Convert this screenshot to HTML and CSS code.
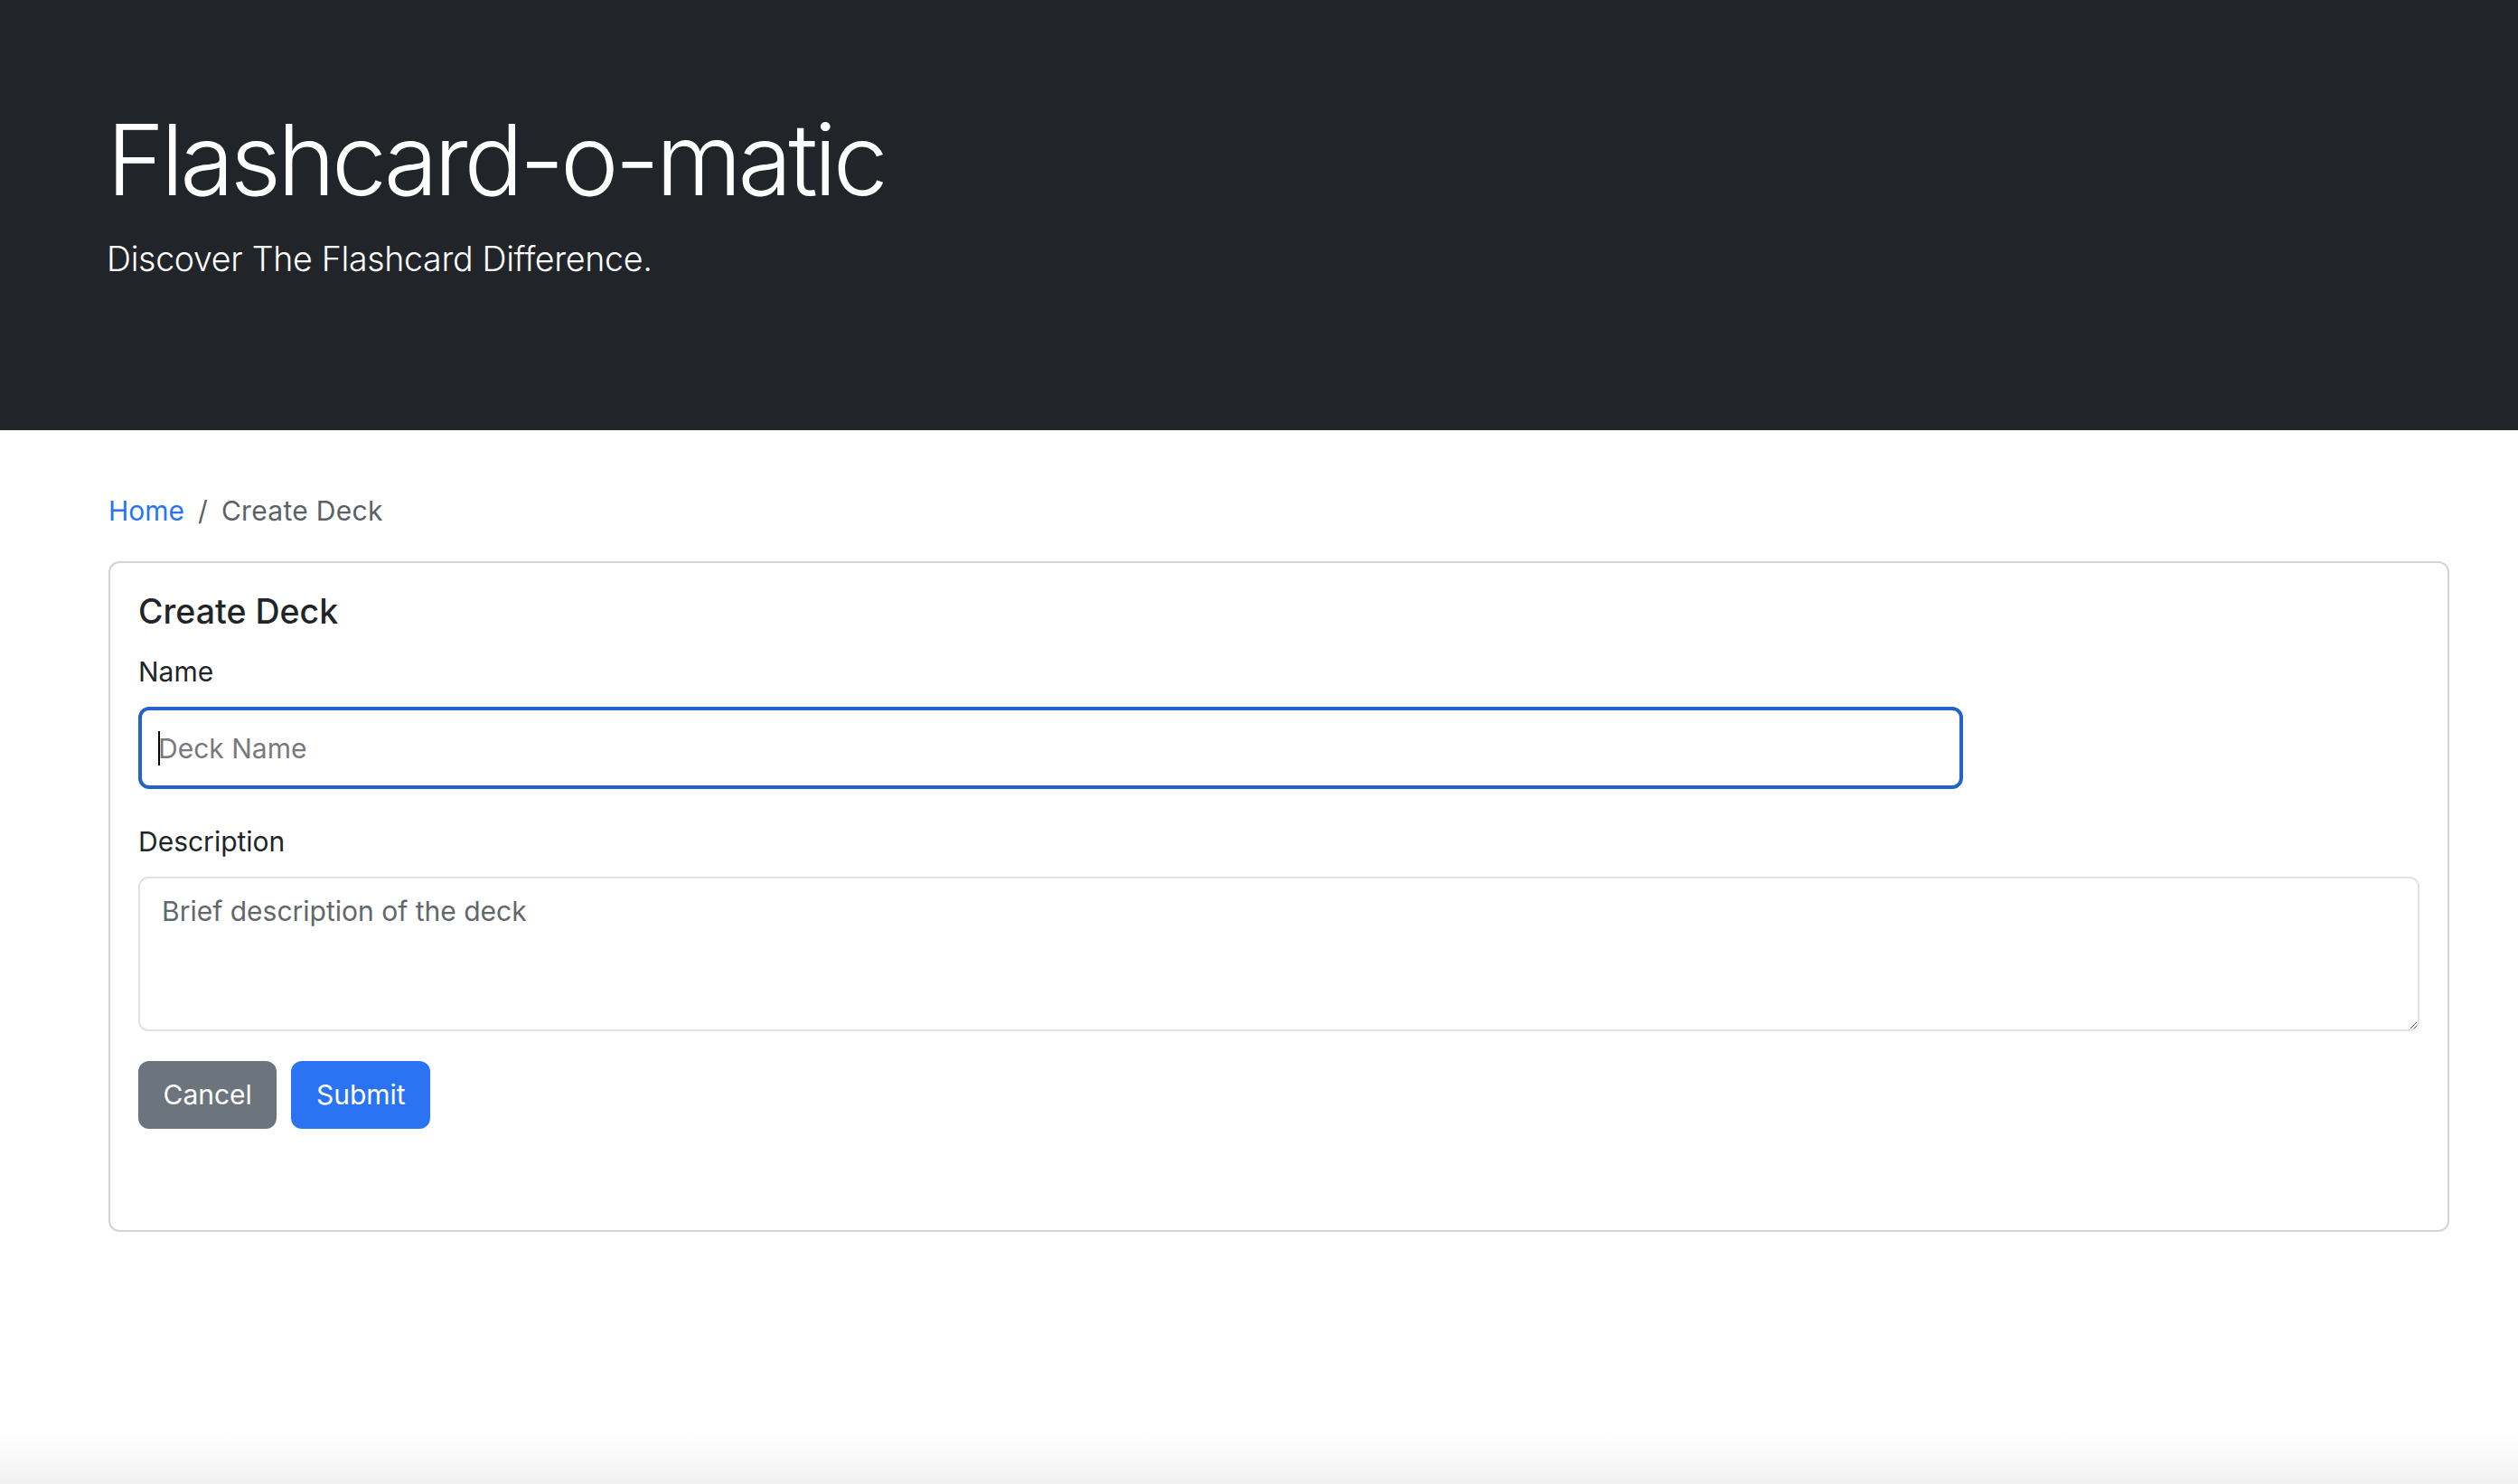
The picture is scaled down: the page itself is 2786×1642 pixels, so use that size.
FILE: index.html
```html
<!DOCTYPE html>
<html lang="en">
<head>
<meta charset="utf-8">
<title>Flashcard-o-matic</title>
<link rel="stylesheet" href="styles.css">
</head>
<body>
<header class="hero">
  <h1 class="hero-title">Flashcard-o-matic</h1>
  <p class="hero-lead">Discover The Flashcard Difference.</p>
</header>
<main class="page">
  <nav class="crumbs" aria-label="breadcrumb">
    <a class="crumb-link" href="#">Home</a>
    <span class="crumb-sep">/</span>
    <span class="crumb-current">Create Deck</span>
  </nav>
  <section class="card">
    <h2 class="card-title">Create Deck</h2>
    <form class="deck-form">
      <div class="field">
        <label class="field-label" for="name">Name</label>
        <div class="input-wrap">
          <input id="name" class="input input-active" type="text" placeholder="Deck Name">
          <span class="caret"></span>
        </div>
      </div>
      <div class="field field-last">
        <label class="field-label" for="description">Description</label>
        <textarea id="description" class="textarea" placeholder="Brief description of the deck"></textarea>
      </div>
      <div class="actions">
        <button type="button" class="btn btn-secondary">Cancel</button>
        <button type="submit" class="btn btn-primary">Submit</button>
      </div>
    </form>
  </section>
</main>
</body>
</html>
```

FILE: styles.css
```css
html {
  min-height: 100%;
  background: linear-gradient(to bottom, #ffffff 0, #ffffff calc(100% - 56px), #f1f1f1 100%);
}

body {
  margin: 0;
  min-height: 1642px;
  font-family: Inter, "Noto Sans", "Liberation Sans", sans-serif;
  font-size: 30px;
  line-height: 45px;
  color: #212529;
}

.hero {
  background: #212529;
  color: #ffffff;
  padding: 110px 0 161px 118px;
}

.hero-title {
  margin: 0 0 17px 0;
  font-size: 109px;
  line-height: 132px;
  font-weight: 300;
  letter-spacing: -4.2px;
}

.hero-lead {
  margin: 0;
  font-size: 37.5px;
  line-height: 56px;
  font-weight: 300;
  letter-spacing: -0.3px;
}

.page {
  margin-left: 120px;
  width: 2590px;
}

.crumbs {
  margin-top: 67px;
  display: flex;
  align-items: baseline;
  line-height: 45px;
}

.crumb-link {
  color: #2a74f4;
  text-decoration: none;
}

.crumb-sep {
  color: #5c6166;
  padding: 0 15px;
}

.crumb-current {
  color: #5c6166;
  letter-spacing: 0.3px;
}

.card {
  margin-top: 33px;
  border: 2px solid #d3d3d3;
  border-radius: 12px;
  padding: 31px;
}

.card-title {
  margin: 0 0 22px 0;
  font-size: 37.5px;
  line-height: 45px;
  font-weight: 500;
}

.deck-form {
  margin: 0 0 81px 0;
}

.field {
  margin-bottom: 36px;
}

.field-last {
  margin-bottom: 33px;
}

.field-label {
  display: block;
  margin-bottom: 16px;
}

.input-wrap {
  position: relative;
  width: 80%;
}

.input {
  display: block;
  box-sizing: border-box;
  width: 100%;
  height: 91px;
  padding: 0 18px;
  font-family: inherit;
  font-size: 30px;
  color: #212529;
  background: #ffffff;
  border: 2px solid #dee2e6;
  border-radius: 12px;
  outline: none;
}

.input-active {
  border: 4px solid #2463c8;
}

.input::placeholder {
  color: #77797c;
}

.caret {
  position: absolute;
  left: 22px;
  top: 27px;
  width: 2px;
  height: 38px;
  background: #000000;
}

.textarea {
  display: block;
  box-sizing: border-box;
  width: 100%;
  height: 171px;
  padding: 14px 24px 13px;
  font-family: inherit;
  font-size: 30px;
  line-height: 45px;
  color: #212529;
  background: #ffffff;
  border: 2px solid #dee2e6;
  border-radius: 11px;
  outline: none;
  resize: vertical;
}

.textarea::placeholder {
  color: #62676c;
}

.actions {
  display: flex;
  gap: 16px;
}

.btn {
  box-sizing: border-box;
  height: 75px;
  padding: 0 27.5px;
  font-family: inherit;
  font-size: 30px;
  line-height: 45px;
  color: #ffffff;
  border: none;
  border-radius: 12px;
  cursor: pointer;
}

.btn-secondary {
  background: #6c757d;
}

.btn-primary {
  background: #2a74f4;
}
```
